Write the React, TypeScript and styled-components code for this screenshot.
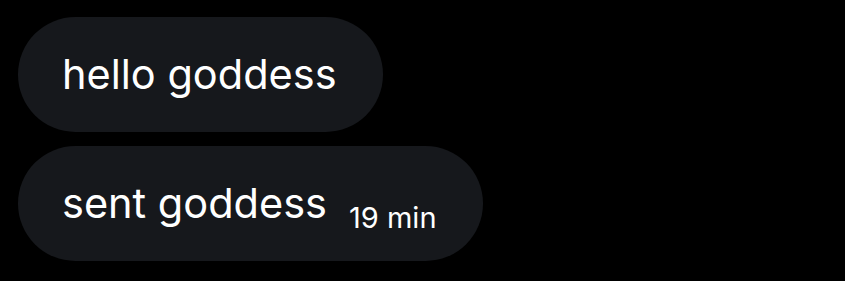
import styled, { createGlobalStyle } from "styled-components";

const messages = [
  { id: 1, text: "hello goddess" },
  { id: 2, text: "sent goddess", time: "19 min" },
];

const App = () => {
  return (
    <>
      <GlobalStyle />
      <Thread>
        {messages.map((m) => (
          <Bubble key={m.id}>
            <Text>{m.text}</Text>
            {m.time && <Time>{m.time}</Time>}
          </Bubble>
        ))}
      </Thread>
    </>
  );
};

export default App;

const GlobalStyle = createGlobalStyle`
  html, body {
    margin: 0;
    background: #000000;
  }
`;

const Thread = styled.div`
  display: flex;
  flex-direction: column;
  align-items: flex-start;
  gap: 14px;
  padding: 17px 18px;
  font-family: Inter, "Noto Sans", sans-serif;
`;

const Bubble = styled.div`
  display: flex;
  align-items: baseline;
  gap: 22px;
  height: 115px;
  box-sizing: border-box;
  padding: 0 46px 0 44px;
  border-radius: 58px;
  background: #16181c;
  color: #ffffff;
  line-height: 114px;
`;

const Text = styled.span`
  font-size: 41.5px;
  font-weight: 400;
`;

const Time = styled.span`
  font-size: 29px;
  position: relative;
  top: 10px;
`;
